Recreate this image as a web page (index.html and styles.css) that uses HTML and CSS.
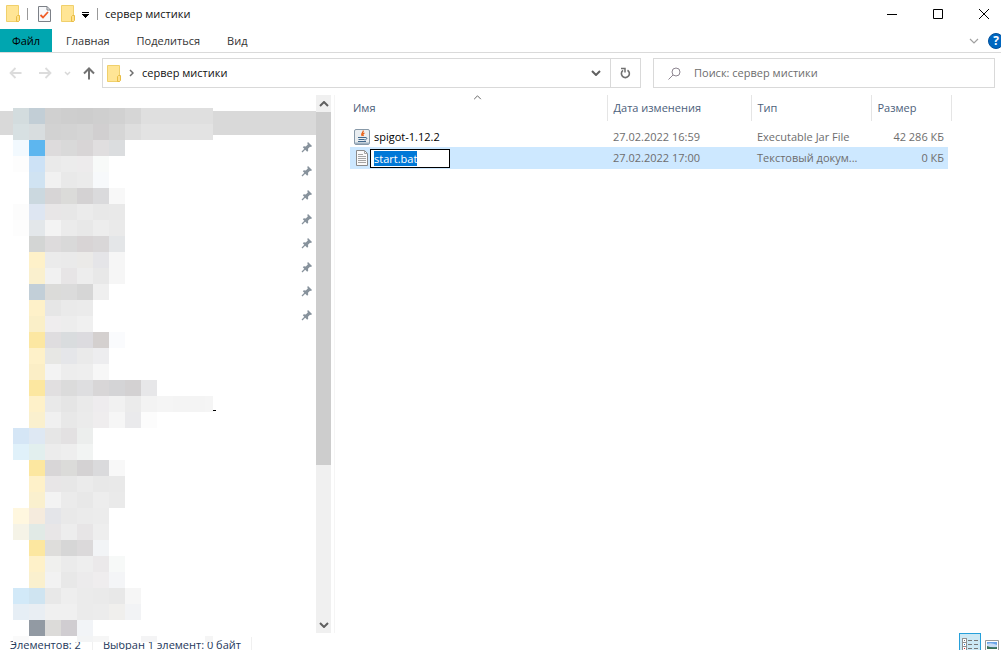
FILE: index.html
```html
<!DOCTYPE html>
<html lang="ru">
<head>
<meta charset="utf-8">
<title>сервер мистики</title>
<link rel="stylesheet" href="styles.css">
</head>
<body>
<svg class="defs" aria-hidden="true">
  <symbol id="folder" viewBox="0 0 14 17"><path d="M.5.5h12v16H.5z" fill="#ffe595" stroke="#f0d06c"/><path d="M10.500 16.500v-5l1-1h2v5l-1 1z" fill="#ffe08a" stroke="#e8bd45"/></symbol>
  <symbol id="pin" viewBox="0 0 12 12"><path d="M7 1l4 4-1 1-1-.3-2 2 .2 2-1 1L1.800 6.300l1-1 2 .1 2-2L6.300 2z" fill="#87929c"/><path d="M4.500 7.500L1 11" stroke="#87929c" stroke-width="1.300"/></symbol>
  <symbol id="chevron" viewBox="0 0 10 6"><path d="M1 1l4 4 4-4" fill="none" stroke="currentColor" stroke-width="var(--w, 1.200)"/></symbol>
</svg>

<header class="titlebar">
  <svg class="folder"><use href="#folder"/></svg>
  <span class="bar"></span>
  <button class="plain check" aria-label="Свойства"><svg width="13" height="16" viewBox="0 0 13 16"><path d="M.5.5H9l3.500 3.500v11.500H.5z" fill="#f7f8fa" stroke="#7c8087"/><path d="M9 .5V4h3.500" fill="none" stroke="#7c8087"/><path d="M2.500 9l2.500 2.500L10 6" fill="none" stroke="#ef5b25" stroke-width="1.800"/></svg></button>
  <button class="plain newdir" aria-label="Новая папка"><svg class="folder"><use href="#folder"/></svg></button>
  <button class="plain more" aria-label="Настройка панели"><svg width="7" height="6" viewBox="0 0 7 6" shape-rendering="crispEdges"><path d="M0 0h7v1H0zM0 2h7v1H6v1H5v1H4v1H3V5H2V4H1V3H0z"/></svg></button>
  <span class="bar"></span>
  <h1>сервер мистики</h1>
  <div class="controls">
    <button class="plain" aria-label="Свернуть"><svg width="12" height="12"><path d="M1 6.500h10" stroke="#000"/></svg></button>
    <button class="plain" aria-label="Развернуть"><svg width="12" height="12"><path d="M1.500 1.500h9v9h-9z" fill="none" stroke="#000"/></svg></button>
    <button class="plain" aria-label="Закрыть"><svg width="12" height="12"><path d="M1 1l10 10M11 1L1 11" stroke="#000"/></svg></button>
  </div>
</header>

<nav class="tabs">
  <button class="plain tab file">Файл</button>
  <button class="plain tab">Главная</button>
  <button class="plain tab share">Поделиться</button>
  <button class="plain tab">Вид</button>
  <div class="help">
    <button class="plain" aria-label="Развернуть ленту"><svg class="chev light"><use href="#chevron"/></svg></button>
    <button class="plain question" aria-label="Справка">?</button>
  </div>
</nav>

<div class="toolbar">
  <div class="arrows">
    <button class="plain" aria-label="Назад"><svg width="13" height="12"><path d="M12.500 6H1.500M6.500 1L1.500 6l5 5" fill="none" stroke="#dcdcdc" stroke-width="1.800"/></svg></button>
    <button class="plain" aria-label="Вперёд"><svg width="13" height="12"><path d="M0 6h11M6.500 1l5 5-5 5" fill="none" stroke="#dcdcdc" stroke-width="1.800"/></svg></button>
    <button class="plain recent" aria-label="Последние"><svg width="7" height="5"><path d="M1 1l2.500 2.500L6 1" fill="none" stroke="#d8d8d8" stroke-width="1.500"/></svg></button>
    <button class="plain" aria-label="Вверх"><svg width="12" height="13"><path d="M6 12.500V2M1 6.500l5-5 5 5" fill="none" stroke="#727272" stroke-width="2"/></svg></button>
  </div>
  <div class="address">
    <svg class="folder"><use href="#folder"/></svg>
    <svg class="sep" width="5" height="8"><path d="M1 1l3 3-3 3" fill="none" stroke="#6f6f6f" stroke-width="1.500"/></svg>
    <span class="path">сервер мистики</span>
    <button class="plain" aria-label="Предыдущие расположения"><svg class="chev bold"><use href="#chevron"/></svg></button>
    <button class="plain refresh" aria-label="Обновить"><svg width="11" height="12" viewBox="0 0 11 12"><path d="M7.500 3.200a4 4 0 1 1-4.500.200" fill="none" stroke="#707070" stroke-width="1.600"/><path d="M1 1.500h4v4" fill="none" stroke="#707070" stroke-width="1.500"/></svg></button>
  </div>
  <label class="search">
    <svg width="13" height="13" viewBox="0 0 13 13"><circle cx="8" cy="5" r="4" fill="none" stroke="#8d8590"/><path d="M5 8L.500 12.500" stroke="#8d8590"/></svg>
    <input type="search" aria-label="Поиск" placeholder="Поиск: сервер мистики">
  </label>
</div>

<main class="content">
  <aside class="side">
    <div class="tree">
      <div class="selected"></div>
      <ul class="pins">
        <li><svg><use href="#pin"/></svg></li><li><svg><use href="#pin"/></svg></li><li><svg><use href="#pin"/></svg></li><li><svg><use href="#pin"/></svg></li>
        <li><svg><use href="#pin"/></svg></li><li><svg><use href="#pin"/></svg></li><li><svg><use href="#pin"/></svg></li><li><svg><use href="#pin"/></svg></li>
      </ul>
      <svg class="mosaic" id="mosaic" width="204" height="534" viewBox="0 0 204 534" shape-rendering="crispEdges" aria-hidden="true"></svg>
    </div>
    <div class="scroll">
      <button class="plain" aria-label="Вверх"><svg class="chev bold up"><use href="#chevron"/></svg></button>
      <div class="track"><div class="thumb"></div></div>
      <button class="plain" aria-label="Вниз"><svg class="chev bold"><use href="#chevron"/></svg></button>
    </div>
  </aside>

  <section class="files">
    <table>
      <colgroup><col class="c-name"><col class="c-date"><col class="c-type"><col class="c-size"></colgroup>
      <thead><tr>
        <th>Имя<svg class="chev sort"><use href="#chevron"/></svg></th><th>Дата изменения</th><th>Тип</th><th>Размер</th>
      </tr></thead>
      <tbody>
        <tr>
          <td><div class="name">
            <svg width="16" height="16" viewBox="0 0 16 16"><rect x=".5" y=".5" width="15" height="15" rx="1.500" fill="#e9edf0" stroke="#8899a8"/><path d="M1 13.500h14v1.500H1z" fill="#9fb2c3"/><path d="M9 1.500c1.500 2-3 2.500-1 5.500M10.500 4c-2 1-2 1.500-1 3" fill="none" stroke="#e8590c" stroke-width="1.200"/><path d="M4 8.500h7M4.500 10.500h6M4 12.500h8M11 8.500c3-.5 2 2.500-.5 2.500" fill="none" stroke="#41688c"/></svg>
            <span>spigot-1.12.2</span></div></td>
          <td>27.02.2022 16:59</td><td>Executable Jar File</td><td>42 286 КБ</td>
        </tr>
        <tr class="active">
          <td><div class="name">
            <svg width="16" height="16" viewBox="0 0 16 16"><path d="M2.500.5h8l3 3v12h-11z" fill="#fafafa" stroke="#8b8b8b"/><path d="M10.500.5v3h3M4 4.500h5M4 6.500h8M4 8.500h8M4 10.500h8M4 12.500h8" fill="none" stroke="#a5a5a5"/></svg>
            <input id="rename" class="rename" type="text" value="start.bat" aria-label="Имя файла" spellcheck="false"></div></td>
          <td>27.02.2022 17:00</td><td>Текстовый докум...</td><td>0 КБ</td>
        </tr>
      </tbody>
    </table>
  </section>
</main>

<footer class="status">
  <span class="count">Элементов: 2</span>
  <span class="chosen">Выбран 1 элемент: 0 байт</span>
  <div class="views">
    <button class="plain view on" aria-label="Таблица"><svg width="16" height="15" viewBox="0 0 16 15" shape-rendering="crispEdges"><path d="M.5.5h4v4h-4zM.5 4.500h4v4h-4zM.5 8.500h4v4h-4z" fill="#fff" stroke="#909090"/><path d="M6 2.500h4m2 0h4M6 6.500h4m2 0h4M6 10.500h4m2 0h4" stroke="#777"/><path d="M2 2h1v1H2z" fill="#777"/><path d="M2 6h1v1H2z" fill="#2a7fd4"/><path d="M2 10h1v1H2z" fill="#d22"/></svg></button>
    <button class="plain view" aria-label="Крупные значки"><svg width="14" height="11" viewBox="0 0 14 11"><path d="M.5.5h13v10H.5z" fill="#fff" stroke="#999"/><path d="M2 2h10v7H2z" fill="#6ba4e8"/><path d="M2 4q4-2 10 1v2H2z" fill="#c8dcf5"/><path d="M2 6q4 2 10 1v2H2z" fill="#3c7158"/></svg></button>
  </div>
</footer>
<script src="script.js"></script>
</body>
</html>
```
FILE: styles.css
```css
* { box-sizing: border-box; }
body { margin: 0; height: 100vh; display: flex; flex-direction: column; overflow: hidden; background: #fff; color: #111; font: 11px/16px "Open Sans", "Noto Sans", sans-serif; }
svg { display: block; flex: none; }
.defs { position: absolute; width: 0; height: 0; }
.plain { border: 0; padding: 0; background: none; color: inherit; font: inherit; display: flex; align-items: center; justify-content: center; flex: none; }
.folder { width: 14px; height: 17px; }
.chev { width: 10px; height: 6px; }
.light { color: #a0a0a0; }
.bold { --w: 2; color: #606060; }
.up { transform: rotate(180deg); }

.titlebar { flex: none; height: 29px; display: flex; align-items: center; padding: 0 0 2px 6px; }
.bar { width: 1px; height: 12px; background: #999; margin-left: 7px; }
.check { margin-left: 10px; }
.newdir { margin-left: 10px; }
.more { margin: 2px 1px 0 7px; }
h1 { margin: 0 0 0 7px; font-size: 11px; font-weight: 400; line-height: 16px; }
.controls { margin-left: auto; display: flex; align-self: stretch; margin-right: -6px; }
.controls button { width: 46px; }

.tabs { flex: none; height: 24px; display: flex; border-bottom: 1px solid #dadada; color: #333; }
.tab { padding: 0 14px; }
.file { width: 52px; padding: 0; background: #00a6b0; color: #000; }
.share { padding: 0 13px; }
.help { margin-left: auto; display: flex; align-items: center; gap: 9px; margin-right: -3px; }
.question { width: 16px; height: 16px; border-radius: 50%; background: #0067c0; border: 1px solid #00509c; color: #fff; font-weight: 700; font-size: 12px; }

.toolbar { flex: none; height: 42px; display: flex; align-items: center; padding: 0 6px 2px 9px; }
.arrows { display: flex; align-items: center; gap: 17px; width: 93px; }
.recent { margin: 0 -5px; }
.address { flex: 1 1 539px; height: 30px; border: 1px solid #d9d9d9; display: flex; align-items: center; padding-left: 4px; }
.sep { margin: 0 8px; }
.path { flex: 1; }
.address .refresh { width: 30px; align-self: stretch; border-left: 1px solid #d9d9d9; margin-left: 9px; }
.search { flex: 1 1 342px; height: 30px; margin-left: 12px; border: 1px solid #d9d9d9; display: flex; align-items: center; padding-left: 14px; gap: 13px; }
.search input { border: 0; outline: 0; padding: 0; flex: 1; min-width: 0; background: none; font: inherit; }
.search input::placeholder { color: #6d6d6d; opacity: 1; }

.content { flex: 1; min-height: 0; display: flex; }
.side { flex: none; width: 335px; display: flex; border-right: 1px solid #f5f5f5; }
.tree { position: relative; flex: 1; padding-top: 16px; }
.selected { height: 24px; background: #d9d9d9; }
.pins { list-style: none; margin: 0; padding: 0 3px 0 0; }
.pins li { height: 24px; display: flex; align-items: center; justify-content: flex-end; }
.pins svg { width: 12px; height: 12px; }
.mosaic { position: absolute; left: 13px; top: 13px; z-index: 1; }
.scroll { width: 15px; margin-right: 3px; display: flex; flex-direction: column; background: #f0f0f0; }
.scroll button { height: 17px; }
.track { flex: 1; }
.thumb { height: 70%; background: #cdcdcd; }

.files { flex: 1; min-width: 0; padding-left: 15px; }
table { width: 598px; table-layout: fixed; border-collapse: collapse; color: #6d6d6d; }
.c-name { width: 257px; }
.c-date { width: 144px; }
.c-type { width: 120px; }
th { position: relative; height: 26px; padding: 0 6px; text-align: left; font-weight: 400; color: #4c607a; border-right: 1px solid #e5e5e5; }
th:first-child { padding-left: 3px; }
th:last-child { border-right: 0; }
th:last-child::after { content: ""; position: absolute; top: 0; right: -4px; width: 1px; height: 100%; background: #e5e5e5; }
.sort { position: absolute; left: 123px; top: 0; width: 9px; height: 5px; transform: rotate(180deg); color: #666; }
tbody::before { content: ""; display: block; height: 5px; }
td { height: 21px; padding: 0 6px; white-space: nowrap; overflow: hidden; text-overflow: ellipsis; }
td:first-child { padding: 0 0 0 4px; }
td:last-child { padding: 0 4px 0 0; text-align: right; }
.name { display: flex; align-items: center; gap: 4px; color: #000; }
.active { background: #cde8ff; }
.active td { height: 22px; }
.active .name { gap: 0; }
.rename { width: 80px; height: 19px; border: 1px solid #000; outline: 0; border-radius: 0; padding: 0 3px; font: inherit; color: #000; background: #fff; }
.rename::selection { background: #0078d7; color: #fff; }

.status { flex: none; height: 24px; margin-bottom: -7px; padding-left: 10px; display: flex; align-items: center; color: #1e395b; }
.count { width: 83px; border-right: 1px solid #f0f0f0; }
.chosen { padding: 0 10px; border-right: 1px solid #f0f0f0; }
.views { margin-left: auto; display: flex; align-self: stretch; margin-right: -2px; }
.view { width: 22px; }
.on { background: #cce8f4; border: 1px solid #26a0da; }
```
FILE: script.js
```js
const rows = [
  'd3dcde c2ced6 d0d0d0 cecece cdcdcd cfcfcf d1d1d1 d6d6d6 dfdfdf dfdfdf dfdfdf dfdfdf dfdfdf',
  'd7e0e2 d8dddf d2d2d2 d3d3d3 d5d5d5 d1cfd0 d6d6d6 dedede e3e3e3 e3e3e3 e3e3e3 e3e3e3 e3e3e3',
  'f2f9fe 5db6ef dddbdc d9d9d9 d8d5d6 e0dedf dbdddf',
  'fdfdfd cde2f6 eaeaea ececec edebec f8faf9',
  '- d0e3f2 f1f1f1 e9e9e9 ebebeb f7f9fb',
  '- cbd8df d7d5d6 dbdbd9 d4d2d3 dadadc f8f8f8',
  'fcfcfc dee6f2 e8e6e7 e7e7e7 ebebeb e8e8e8 e9e9e9',
  'fdfdfd e3e7ea f3f3f3 ebebeb e8e8e8 ededed eaeaea',
  '- d3d5d4 dddbdc d9d9d9 d8d4d5 d9d7d8 e4e6e8',
  '- fef1c9 ebebeb eaeaea ebeae8 e5e5e8 f6f6f6',
  '- faf0ce f1f1f1 e7e5e6 ededed e8e8e8 f6f6f6',
  '- c2cfd8 dbdbd9 dbdbdb d6d6d6 efefef',
  '- fef1c9 e6e6e6 eaeaea ebebeb',
  '- faefc8 efedee ededed f0f0f0',
  '- fce7a2 dfdddf d9dcde dcdbdf d4d0cf fafbfd',
  '- fef1c9 e7e7e4 e5e6e9 eaeaea ededef',
  '- fbeec6 f3f3f3 ededed eeeeee f7f7f7',
  '- fce7a0 e1dfe0 dbdbdb dedee0 d8d6d7 d4d4d6 d3d1d2 e7e7e9',
  '- fef1c9 e9e9e9 e5e5e5 eaeaea eeecee f1f1f1 ebebeb f3f3f3 f5f5f5 f4f4f4 f4f4f4 f5f5f5',
  '- faf0ce f0f0f0 e8e8e8 ebebeb efedee f6f6f6 eaeaec fcfcfc',
  'd5e6f6 dee8f3 e6e6e6 e3e1e2 eceeed',
  'e0f1fa e2efee ececec eeeeee f2f4f3',
  '- fce7a0 d8d6d7 dbdbd9 d4d2d3 dadadc f8f8f8',
  '- fef1c9 e8e6e7 e7e7e7 ebebeb e8e8e8 e9e9e9',
  '- faf0ce f3f3f3 ebebeb e8e8e8 ededed eaeaea',
  'fff7df f5ebdd e4e5e9 e9e9e9 ebebeb ececec',
  'f5f3e7 e1eae6 e8e6e7 ededed e7e5e6 eeeeee',
  '- fce7a0 dedddb d6d6d6 dbd9da f2f4f6',
  '- fef1c9 f0f0ee ebebeb eeeeee ebe9ea f7f9f8',
  '- faf0ce f2f2f2 e8e8e8 ecebec efedee f4f5f7',
  'd2e9f8 cfe4f1 e8e8e8 eeeeee ebebeb eaeaea e8e8e8 f6f6f6',
  'e6eef5 e9eef3 f0f0f0 f0f0f0 ebebeb ececec f0efed f2f3f5',
  '- 929aa3 dcdbd9 d0cdd1 f2f4f7',
  'fafafa ffffff ffffff ffffff f3f4f5 f6f6f6 ffffff ffffff f4f4f5 ffffff ffffff ffffff f5f5f5'
];
const cell = 16;
const mosaic = document.getElementById('mosaic');
const addRect = (x, y, width, height, fill) => {
  const rect = document.createElementNS('http://www.w3.org/2000/svg', 'rect');
  Object.entries({ x, y, width, height, fill }).forEach(([key, value]) => rect.setAttribute(key, value));
  mosaic.append(rect);
};
rows.forEach((row, r) => row.split(' ').forEach((color, c) => {
  if (color !== '-') addRect(c * cell, r * cell, Math.min(cell, 200 - c * cell), cell, '#' + color);
}));
addRect(200, 302, 3, 1, '#000');
document.getElementById('rename').select();
```
